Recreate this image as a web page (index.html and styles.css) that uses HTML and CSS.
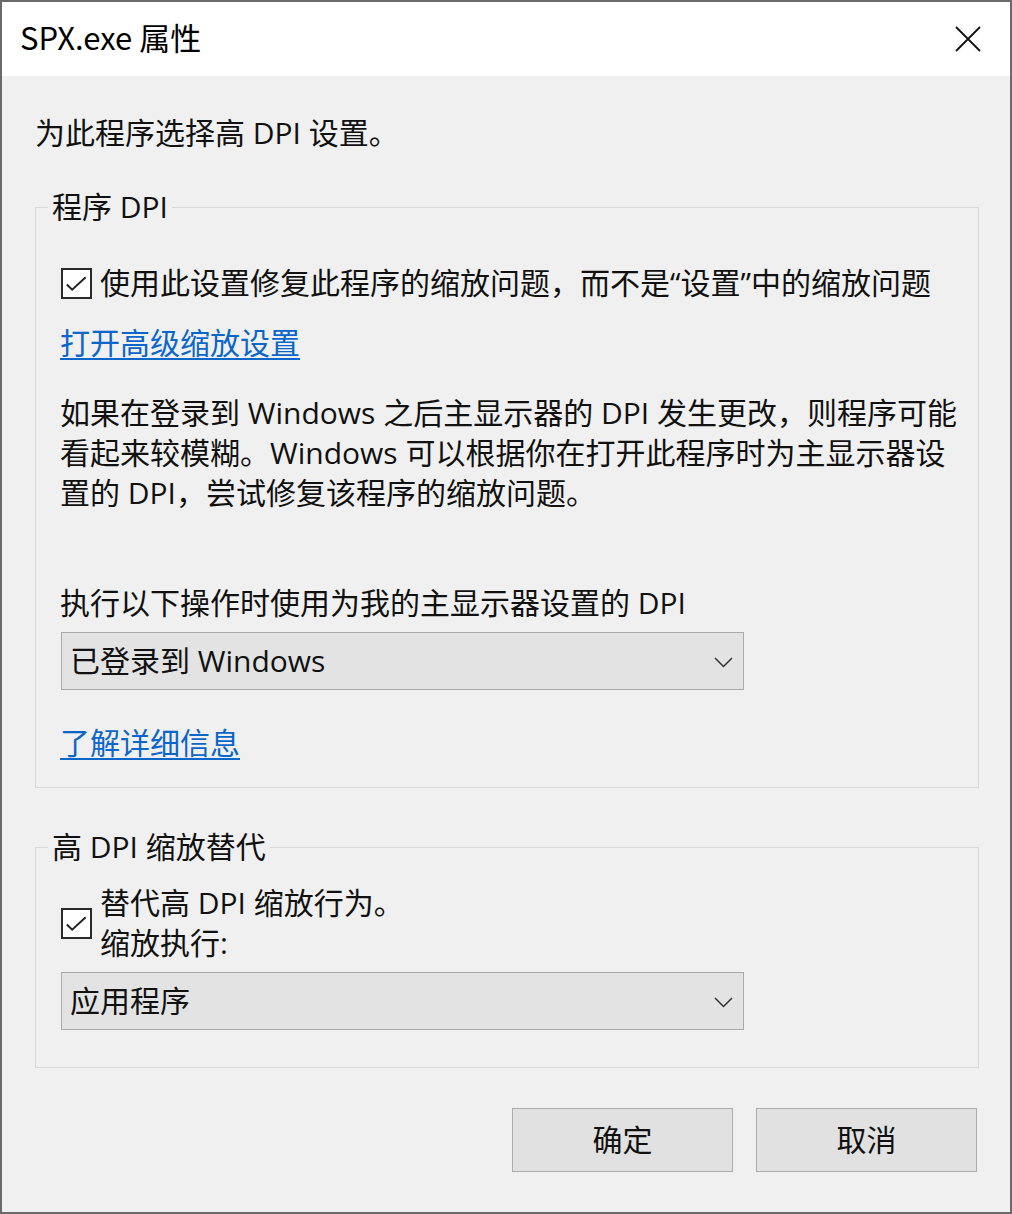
FILE: index.html
```html
<!DOCTYPE html>
<html lang="zh-CN">
<head>
<meta charset="utf-8">
<title>SPX.exe 属性</title>
<link rel="stylesheet" href="styles.css">
</head>
<body>
<div class="window">
  <div class="titlebar">
    <span class="title">SPX.exe 属性</span>
    <span class="close" aria-label="关闭">
      <svg width="26" height="26" viewBox="0 0 26 26"><path d="M1 1L25 25M25 1L1 25" stroke="#111" stroke-width="1.8" fill="none"/></svg>
    </span>
  </div>
  <div class="main">
    <p class="intro">为此程序选择高 DPI 设置。</p>

    <fieldset class="group group-dpi">
      <legend>程序 DPI</legend>
      <div class="check-row">
        <span class="checkbox"><svg width="28" height="28" viewBox="0 0 28 28"><path d="M4 15.5L9.5 21L23.5 8" stroke="#222" stroke-width="2" fill="none"/></svg></span>
        <span class="check-label">使用此设置修复此程序的缩放问题，而不是“设置”中的缩放问题</span>
      </div>
      <a class="link link-adv" href="#">打开高级缩放设置</a>
      <p class="desc">如果在登录到 Windows 之后主显示器的 DPI 发生更改，则程序可能<br>看起来较模糊。Windows 可以根据你在打开此程序时为主显示器设<br>置的 DPI，尝试修复该程序的缩放问题。</p>
      <p class="label">执行以下操作时使用为我的主显示器设置的 DPI</p>
      <div class="select">
        <span>已登录到 Windows</span>
        <svg class="chev" width="19" height="11" viewBox="0 0 19 11"><path d="M1 1L9.5 9.5L18 1" stroke="#333" stroke-width="1.5" fill="none"/></svg>
      </div>
      <a class="link link-more" href="#">了解详细信息</a>
    </fieldset>

    <fieldset class="group group-override">
      <legend>高 DPI 缩放替代</legend>
      <div class="check-row two-line">
        <span class="checkbox"><svg width="28" height="28" viewBox="0 0 28 28"><path d="M4 15.5L9.5 21L23.5 8" stroke="#222" stroke-width="2" fill="none"/></svg></span>
        <span class="check-label">替代高 DPI 缩放行为。<br>缩放执行:</span>
      </div>
      <div class="select">
        <span>应用程序</span>
        <svg class="chev" width="19" height="11" viewBox="0 0 19 11"><path d="M1 1L9.5 9.5L18 1" stroke="#333" stroke-width="1.5" fill="none"/></svg>
      </div>
    </fieldset>

    <div class="buttons">
      <button class="btn" type="button">确定</button>
      <button class="btn" type="button">取消</button>
    </div>
  </div>
</div>
</body>
</html>
```
FILE: styles.css
```css
* { box-sizing: border-box; }
html, body { margin: 0; padding: 0; }
body {
  width: 1012px;
  height: 1214px;
  font-family: "Open Sans", "Noto Sans CJK SC", sans-serif;
  font-size: 30px;
  color: #111;
  background: #f0f0f0;
}
.window {
  width: 1012px;
  height: 1214px;
  border: 2px solid #6a6a6a;
  background: #f0f0f0;
  display: flex;
  flex-direction: column;
}
.titlebar {
  height: 74px;
  background: #fff;
  display: flex;
  align-items: center;
  justify-content: space-between;
  padding: 0 29px 0 18px;
  flex-shrink: 0;
}
.title {
  font-family: "Noto Sans CJK SC", sans-serif;
  font-size: 31px;
  line-height: 40px;
  color: #000;
  margin-top: -4px;
}
.close { display: flex; }
.main {
  flex: 1;
  padding: 37px 31px 0 33px;
}
.intro {
  margin: 0 0 37px 0;
  line-height: 40px;
  white-space: nowrap;
}
.group {
  margin: 0;
  min-width: 0;
  border: 1px solid #d8d8d8;
  padding: 39px 8px 24px 25px;
}
.group legend {
  line-height: 34px;
  padding: 0 4px;
  margin-left: -13px;
}
.group-override {
  margin-top: 42px;
  padding-top: 19px;
  padding-bottom: 37px;
}
.check-row {
  display: flex;
  align-items: center;
  gap: 8px;
  line-height: 40px;
  white-space: nowrap;
}
.checkbox {
  width: 31px;
  height: 31px;
  border: 2px solid #2a2a2a;
  background: #fff;
  display: flex;
  align-items: center;
  justify-content: center;
  flex-shrink: 0;
}
.link {
  display: block;
  width: max-content;
  line-height: 40px;
  color: #0a66c8;
  text-decoration: underline;
  text-underline-offset: 4px;
  text-decoration-thickness: 1.5px;
  margin-left: -1px;
}
.link-adv { margin-top: 20px; }
.link-more { margin-top: 33px; }
.desc {
  margin: 30px 0 0 -1px;
  line-height: 40px;
  white-space: nowrap;
}
.label {
  margin: 70px 0 0 -1px;
  line-height: 40px;
  white-space: nowrap;
}
.select {
  margin-top: 9px;
  width: 683px;
  height: 58px;
  background: #e3e3e3;
  border: 1px solid #a9a9a9;
  display: flex;
  align-items: center;
  justify-content: space-between;
  padding: 0 10px 0 8px;
  line-height: 40px;
}
.chev { display: block; margin-top: 2px; }
.buttons {
  margin-top: 40px;
  display: flex;
  justify-content: flex-end;
  gap: 23px;
  padding-right: 2px;
}
.btn {
  width: 221px;
  height: 64px;
  border: 1px solid #adadad;
  background: #e1e1e1;
  font-family: inherit;
  font-size: 30px;
  color: #111;
  padding: 0;
  line-height: 40px;
}
```
